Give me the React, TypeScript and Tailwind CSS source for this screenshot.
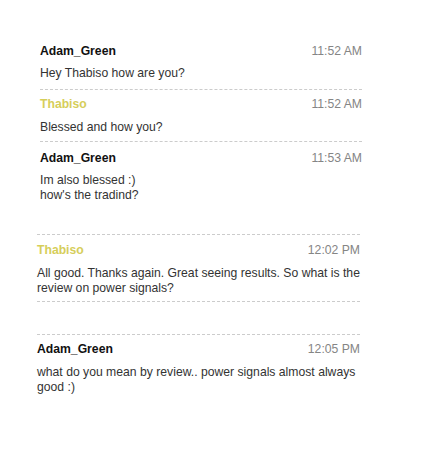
type Msg = {
  name: string
  time: string
  lines: string[]
  me?: boolean
}

const Header = ({ name, time, me }: { name: string; time: string; me?: boolean }) => (
  <div className="flex justify-between h-[15px]">
    <span className={me ? "font-bold text-[#d6ce5a]" : "font-bold text-[#111]"}>{name}</span>
    <span className="text-[#858585]">{time}</span>
  </div>
)

const Body = ({ lines, className }: { lines: string[]; className: string }) => (
  <p className={"text-[#333] " + className}>
    {lines.map((l, i) => (
      <span key={i}>
        {l}
        {i < lines.length - 1 && <br />}
      </span>
    ))}
  </p>
)

const first: Msg[] = [
  { name: "Adam_Green", time: "11:52 AM", lines: ["Hey Thabiso how are you?"] },
  { name: "Thabiso", time: "11:52 AM", lines: ["Blessed and how you?"], me: true },
]

export default function App() {
  return (
    <div className="w-[434px] h-[455px] bg-white font-['Liberation_Sans',Arial,sans-serif] text-[12.2px] leading-[15px]">
      <div className="w-[322px] ml-[40px] pt-[44px]">
        <div className="pb-[8px] border-b border-dashed border-[#cccccc]">
          <Header name={first[0].name} time={first[0].time} />
          <Body lines={first[0].lines} className="mt-[7px]" />
        </div>
        <div className="pt-[7px] pb-[6px] border-b border-dashed border-[#cccccc]">
          <Header name={first[1].name} time={first[1].time} me />
          <Body lines={first[1].lines} className="mt-[8px]" />
        </div>
        <div className="pt-[9px] h-[92px]">
          <Header name="Adam_Green" time="11:53 AM" />
          <Body lines={["Im also blessed :)", "how's the tradind?"]} className="mt-[7px]" />
        </div>
      </div>

      <div className="w-[323px] ml-[37px]">
        <div className="pt-[8px] pb-[5px] border-y border-dashed border-[#cccccc]">
          <Header name="Thabiso" time="12:02 PM" me />
          <Body
            lines={["All good. Thanks again. Great seeing results. So what is the review on power signals?"]}
            className="mt-[8px] mr-[-6px]"
          />
        </div>
        <div className="mt-[32px] pt-[7px] border-t border-dashed border-[#cccccc]">
          <Header name="Adam_Green" time="12:05 PM" />
          <Body
            lines={["what do you mean by review.. power signals almost always good :)"]}
            className="mt-[8px]"
          />
        </div>
      </div>
    </div>
  )
}
